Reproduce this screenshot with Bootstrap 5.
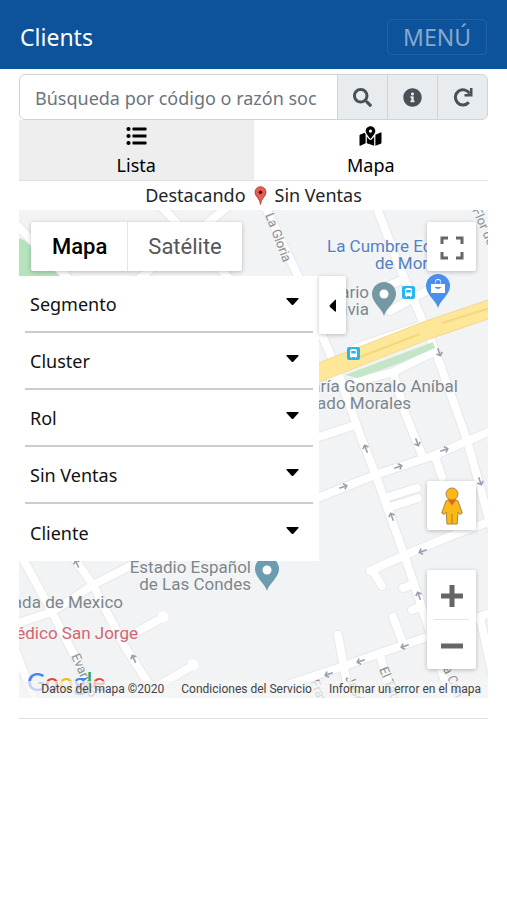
<!DOCTYPE html>
<html lang="es">
<head>
<meta charset="utf-8">
<meta name="viewport" content="width=device-width, initial-scale=1">
<title>Clients</title>
<link rel="stylesheet" href="https://cdn.jsdelivr.net/npm/bootstrap@5.3.0/dist/css/bootstrap.min.css">
<style>
  body { font-family: "Noto Sans", "Open Sans", sans-serif; font-size: 18px; line-height: 28px; color: #212529; }
  .top-bar { background: #0d539b; height: 69px; padding: 4px 20px 0; }
  .top-bar .navbar-brand { font-size: 23px; }
  .menu-btn { font-size: 23px; line-height: 24px; padding: 5px 15px; color: #86a9cd; border: 1px solid #2262a4; border-radius: 5px; }
  .page { padding: 5px 19px 0; }
  .search .form-control { font-size: 18px; height: 46px; padding: 2px 20px 0 15px; border-color: #ced4da; }
  .search .form-control::placeholder { color: #6c757d; }
  .search .btn { width: 51px; padding: 0 0 3px; background: #e9ecef; border-color: #ced4da; color: #495057; }
  .view-tabs { border-bottom: 1px solid #dee2e6; }
  .view-tabs a { height: 60px; padding-top: 5px; gap: 4px; color: #000; text-decoration: none; }
  .view-tabs a.inactive { background: #eee; }
  .view-tabs svg { height: 22px; }
  .status { height: 29px; line-height: 29px; }
  .map { height: 488px; background: #f1f3f4; font-family: Roboto, sans-serif; }
  .map-tile { box-shadow: 0 1px 4px rgba(0,0,0,.25); border-radius: 2px; background: #fff; }
  .map-type { top: 12px; left: 12px; height: 49px; }
  .map-type button { border: 0; background: none; font-size: 22px; color: #565656; padding: 0 20px; }
  .map-type button:first-child { color: #000; font-weight: 500; border-right: 1px solid #e6e6e6; padding-left: 21px; }
  .map-side { top: 12px; right: 12px; bottom: 29px; width: 49px; }
  .map-side button { border: 0; width: 49px; height: 49px; padding: 0; }
  .zoom-box { margin-top: 40px; }
  .zoom-box hr { margin: 0 7px; color: #999; }
  .filters { top: 66px; left: 0; width: 300px; background: #fff; padding: 0 6px; font-family: "Noto Sans", sans-serif; }
  .filters button { height: 57px; padding: 0 14px 0 5px; background: none; border: 0; border-bottom: 2px solid #ccc; font-size: 18px; color: #111; }
  .filters li:last-child button { border-bottom: 0; }
  .filters svg { margin-bottom: 3px; }
  .collapse-btn { top: 66px; left: 300px; width: 27px; height: 58px; border: 0; padding: 0; }
  .brand-mark { left: 8px; bottom: 2px; font: 500 25px/30px Lato, sans-serif; }
  .c-b { color: #4285f4; } .c-r { color: #ea4335; } .c-y { color: #fbbc05; } .c-g { color: #34a853; }
  .legal { left: 0; right: 0; bottom: 0; height: 17px; line-height: 17px; font-size: 12px; gap: 17px; padding-right: 7px; background: rgba(245,245,245,.7); }
  .legal, .legal a { color: #444; text-decoration: none; }
  .page-rule { margin: 20px 0; color: #888; }
</style>
<script src="https://cdn.jsdelivr.net/npm/bootstrap@5.3.0/dist/js/bootstrap.bundle.min.js"></script>
</head>
<body>
<nav class="top-bar d-flex align-items-center justify-content-between">
  <a class="navbar-brand text-white m-0" href="#">Clients</a>
  <button class="btn menu-btn" type="button">MENÚ</button>
</nav>
<main class="page">
  <form class="search input-group">
    <input class="form-control" type="text" placeholder="Búsqueda por código o razón social" aria-label="Búsqueda por código o razón social">
    <button class="btn" type="button" aria-label="Buscar"><svg width="19" height="19" viewBox="0 0 512 512" fill="currentColor"><path d="M505 442.700 405.300 343c-4.500-4.500-10.600-7-17-7H372c27.600-35.300 44-79.700 44-128C416 93.100 322.900 0 208 0S0 93.100 0 208s93.100 208 208 208c48.300 0 92.700-16.400 128-44v16.300c0 6.400 2.500 12.500 7 17l99.700 99.700c9.400 9.400 24.600 9.400 33.900 0l28.300-28.300c9.400-9.400 9.400-24.600.1-34zM208 336c-70.700 0-128-57.200-128-128 0-70.700 57.200-128 128-128 70.700 0 128 57.200 128 128 0 70.700-57.200 128-128 128z"/></svg></button>
    <button class="btn" type="button" aria-label="Información"><svg width="19" height="19" viewBox="0 0 512 512" fill="currentColor"><path d="M256 8C119 8 8 119.100 8 256s111 248 248 248 248-111 248-248S393 8 256 8zm0 110c23.200 0 42 18.800 42 42s-18.800 42-42 42-42-18.800-42-42 18.800-42 42-42zm56 254c0 6.600-5.400 12-12 12h-88c-6.600 0-12-5.400-12-12v-24c0-6.600 5.400-12 12-12h12v-64h-12c-6.600 0-12-5.400-12-12v-24c0-6.600 5.400-12 12-12h64c6.600 0 12 5.400 12 12v100h12c6.600 0 12 5.400 12 12z"/></svg></button>
    <button class="btn" type="button" aria-label="Actualizar"><svg width="20" height="20" viewBox="0 0 20 20" fill="none" stroke="currentColor" stroke-width="3"><path d="M16.500 6.500A7.600 7.600 0 1 0 15.800 15.200"/><path d="M18.200 1v7.200H11.500" stroke-width="2.600"/></svg></button>
  </form>
  <div class="view-tabs row g-0 text-center">
    <a class="inactive col d-flex flex-column align-items-center" href="#lista">
      <svg width="21" viewBox="0 0 21 22"><g fill="#000"><circle cx="2.500" cy="4" r="2.100"/><circle cx="2.500" cy="11" r="2.100"/><circle cx="2.500" cy="18" r="2.100"/><rect x="6.500" y="2.600" width="14" height="2.800" rx=".6"/><rect x="6.500" y="9.600" width="14" height="2.800" rx=".6"/><rect x="6.500" y="16.600" width="14" height="2.800" rx=".6"/></g></svg>
      <span>Lista</span>
    </a>
    <a class="col d-flex flex-column align-items-center" href="#mapa">
      <svg width="23" viewBox="0 -32 576 576"><path d="M288 0c-69.600 0-126 56.400-126 126 0 56.300 82.400 158.800 113.900 196 6.400 7.500 17.800 7.500 24.200 0C331.600 284.800 414 182.300 414 126 414 56.400 357.600 0 288 0zm0 168a42 42 0 1 1 0-84 42 42 0 0 1 0 84zM20.100 216A32 32 0 0 0 0 245.700V496c0 11.300 11.400 19 21.900 14.900L160 448V214.900c-8.800-16-16.100-31.500-21.300-46.400zM288 359.700c-14.100 0-27.400-6.200-36.500-17-19.700-23.200-40.600-49.600-59.500-76.700V448l192 64V266c-18.900 27.100-39.800 53.500-59.500 76.700-9.100 10.800-22.400 17-36.500 17zm266.100-198.600L416 224v288l139.900-56A32 32 0 0 0 576 426.300V176c0-11.300-11.400-19-21.900-14.900z"/></svg>
      <span>Mapa</span>
    </a>
  </div>
  <div class="status d-flex justify-content-center align-items-center gap-2">
    <span>Destacando</span>
    <svg width="13" height="19" viewBox="0 0 13 19"><path d="M6.500 18.500C6.200 12.500 1 10.500 1 6.200a5.500 5.500 0 0 1 11 0C12 10.500 6.800 12.500 6.500 18.500z" fill="#ea5b50" stroke="#a5372f" stroke-width=".8"/><circle cx="6.500" cy="6.200" r="1.800" fill="#3c0c08"/></svg>
    <span>Sin Ventas</span>
  </div>

  <section class="map position-relative overflow-hidden" aria-label="Mapa">
    <svg class="d-block w-100 h-100" viewBox="19 210 469 488" preserveAspectRatio="xMidYMid slice">
      <defs>
        <g id="roads" fill="none" stroke-linecap="round" stroke-linejoin="round">
          <path d="M10 218 75 285M158 203 240 290M236 200 125 290" />
          <path d="M262 200 300 280 320 330 340 378 362 440 375 473 405 557 427 623 450 698"/>
          <path d="M375 203 400 268 435 350 467 440 492 530"/>
          <path d="M325 375 345 385 393 372 434 352M393 372 405 413 422 455"/>
          <path d="M310 440 355 425M310 501 375 475 435 455 500 427"/>
          <path d="M435 457 442 477M388 497 417 488M390 507 418 498"/>
          <path d="M370 571 405 555 453 535 500 518M374 573 382 586M403 588 414 584M412 610 420 607"/>
          <path d="M290 684 347 665 383 652 427 637 500 609M338 635 350 700M393 617 403 643M380 655 392 698M480 617 492 672"/>
          <path d="M18 550 52 612 74 655 97 705M65 545 93 585 125 647 158 698"/>
          <path d="M15 624 52 612 93 585 130 566M137 632 162 618M158 686 192 666M15 650 37 705"/>
          <path d="M355 348 422 325M385 287 405 279M390 311 430 289"/>
        </g>
        <path id="arrow" d="M-4 0H4M1-3 4 0 1 3" fill="none" stroke="#9a9fae" stroke-width="1.600"/>
        <g id="bus"><rect width="13" height="13" rx="2" fill="#27b7f0"/><path d="M3 4q0-2 2-2h3q2 0 2 2v6H9v1H8v-1H5v1H4v-1H3z" fill="#fff"/><path d="M4.200 4h4.600v2.500H4.200z" fill="#27b7f0"/></g>
        <path id="pin" d="M0 17C-2 9-12 4-12-5a12 12 0 0 1 24 0C12 4 2 9 0 17z"/>
      </defs>
      <rect x="19" y="210" width="469" height="488" fill="#f1f3f4"/>
      <path d="M19 238 31 243 62 277H19z" fill="#b5e3bd"/>
      <use href="#roads" stroke="#e6e8eb" stroke-width="10"/>
      <use href="#roads" stroke="#fff" stroke-width="8"/>
      <circle cx="163" cy="617" r="5.500" fill="#fff"/><circle cx="193" cy="665" r="5.500" fill="#fff"/>
      <path d="M345 375 433 342 435 348 400 363 358 378z" fill="#c3e6c6"/>
      <path d="M305 378 425 331 507 303" fill="none" stroke="#f3d98e" stroke-width="19"/>
      <path d="M305 378 425 331 507 303" fill="none" stroke="#ffe799" stroke-width="17"/>
      <path d="M360 357 420 334M442 323 490 308" stroke="#f5d77e" stroke-width="2"/>
      <use href="#arrow" transform="translate(343 487) rotate(-20)"/><use href="#arrow" transform="translate(398 467) rotate(-20)"/><use href="#arrow" transform="translate(444 450) rotate(-20)"/>
      <use href="#arrow" transform="translate(366 449) rotate(-110)"/><use href="#arrow" transform="translate(392 517) rotate(-110)"/><use href="#arrow" transform="translate(417 442) rotate(70)"/>
      <use href="#arrow" transform="translate(439 352) rotate(70)"/><use href="#arrow" transform="translate(480 481) rotate(70)"/><use href="#arrow" transform="translate(423 551) rotate(160)"/>
      <use href="#arrow" transform="translate(419 596) rotate(-110)"/><use href="#arrow" transform="translate(405 646) rotate(160)"/><use href="#arrow" transform="translate(361 661) rotate(160)"/>
      <use href="#arrow" transform="translate(329 674) rotate(160)"/><use href="#arrow" transform="translate(134 659) rotate(-115)"/><use href="#arrow" transform="translate(77 564) rotate(-115)"/>
      <g font-size="13" fill="#8b8f94" stroke="#f5f6f7" stroke-width="2" paint-order="stroke">
        <text transform="translate(265 215) rotate(69)">La Gloria</text>
        <text transform="translate(472 210) rotate(66)">Flor de Azucenas</text>
        <text transform="translate(71 656) rotate(66)">Evaristo</text>
        <text transform="translate(379 669) rotate(68)">El Tata</text>
        <text transform="translate(345 678) rotate(66)">José</text>
        <text transform="translate(310 682) rotate(66)">Fray</text>
        <text transform="translate(440 662) rotate(66)">La Can</text>
      </g>
      <g font-size="17" fill="#7b868c" stroke="#f5f6f7" stroke-width="2" paint-order="stroke">
        <g fill="#5580c4"><text x="327" y="252">La Cumbre Edificio</text><text x="375" y="269">de Morales</text></g>
        <text x="369" y="298" text-anchor="end">Santuario</text><text x="369" y="315" text-anchor="end">Bolivia</text>
        <text x="458" y="392" text-anchor="end">María Gonzalo Aníbal</text><text x="411" y="409" text-anchor="end">Hurtado Morales</text>
        <text x="251" y="573" text-anchor="end">Estadio Español</text><text x="251" y="590" text-anchor="end">de Las Condes</text>
        <text x="123" y="608" text-anchor="end">Embajada de Mexico</text>
        <text x="138" y="639" text-anchor="end" fill="#cf6670">Centro Médico San Jorge</text>
      </g>
      <use href="#pin" x="384" y="299" fill="#7697a4"/><circle cx="384" cy="294" r="4.500" fill="#fff"/>
      <use href="#pin" x="267" y="574" fill="#6c9cb0"/><circle cx="267" cy="570" r="4.500" fill="#fff"/>
      <use href="#pin" x="438" y="291" fill="#4a8fea"/>
      <path d="M431 284h14v9h-14zM435 284v-2q0-3 3-3t3 3v2" fill="#fff"/><path d="M435.500 284v-2q0-2 2.500-2t2.500 2v2zM434.500 287q3.500 4 7 0" fill="#4a8fea"/>
      <use href="#bus" x="402" y="286"/><use href="#bus" x="347" y="347"/>
    </svg>

    <div class="map-type map-tile position-absolute d-flex">
      <button type="button">Mapa</button><button type="button">Satélite</button>
    </div>
    <div class="map-side position-absolute d-flex flex-column">
      <button class="map-tile mb-auto" type="button" aria-label="Pantalla completa"><svg width="24" height="24" fill="none" stroke="#666" stroke-width="3"><path d="M2 8V2h6M16 2h6v6M22 16v6h-6M8 22H2v-6"/></svg></button>
      <button class="map-tile" type="button" aria-label="Street View"><svg width="22" height="38" viewBox="0 0 22 38"><path d="M5 14Q6.500 12 11 12t6 2l4.300 12-2.600 1.500L17 25l-.8 12H6L5.200 25l-2 2.500L.700 26z" fill="#fbb917" stroke="#a88748" stroke-width="1"/><path d="M7 13h8l-4 5.500z" fill="#e8621d"/><path d="M11 27v10" stroke="#b97a18"/><circle cx="11" cy="7" r="6" fill="#fbb917" stroke="#a88748"/></svg></button>
      <div class="zoom-box map-tile">
        <button class="bg-transparent d-block" type="button" aria-label="Acercar"><svg width="24" height="24"><path d="M12 1v22M1 12h22" stroke="#666" stroke-width="5"/></svg></button>
        <hr>
        <button class="bg-transparent d-block" type="button" aria-label="Alejar"><svg width="24" height="24"><path d="M1 12h22" stroke="#666" stroke-width="5"/></svg></button>
      </div>
    </div>
    <ul class="filters list-unstyled position-absolute m-0">
      <li><button class="w-100 d-flex justify-content-between align-items-center" type="button">Segmento<svg width="13" height="10"><path d="M1 1h11q1 0 .5 1L7.500 7.500q-1 1-2 0L.5 2Q0 1 1 1z"/></svg></button></li>
      <li><button class="w-100 d-flex justify-content-between align-items-center" type="button">Cluster<svg width="13" height="10"><path d="M1 1h11q1 0 .5 1L7.500 7.500q-1 1-2 0L.5 2Q0 1 1 1z"/></svg></button></li>
      <li><button class="w-100 d-flex justify-content-between align-items-center" type="button">Rol<svg width="13" height="10"><path d="M1 1h11q1 0 .5 1L7.500 7.500q-1 1-2 0L.5 2Q0 1 1 1z"/></svg></button></li>
      <li><button class="w-100 d-flex justify-content-between align-items-center" type="button">Sin Ventas<svg width="13" height="10"><path d="M1 1h11q1 0 .5 1L7.500 7.500q-1 1-2 0L.5 2Q0 1 1 1z"/></svg></button></li>
      <li><button class="w-100 d-flex justify-content-between align-items-center" type="button">Cliente<svg width="13" height="10"><path d="M1 1h11q1 0 .5 1L7.500 7.500q-1 1-2 0L.5 2Q0 1 1 1z"/></svg></button></li>
    </ul>
    <button class="collapse-btn map-tile position-absolute" type="button" aria-label="Ocultar filtros"><svg width="8" height="14"><path d="M7 1v11q0 1-1 .5L1 8Q0 7 1 6L6 1q1-1 1 0z"/></svg></button>
    <div class="brand-mark position-absolute"><span class="c-b">G</span><span class="c-r">o</span><span class="c-y">o</span><span class="c-b">g</span><span class="c-g">l</span><span class="c-r">e</span></div>
    <div class="legal position-absolute d-flex justify-content-end">
      <span>Datos del mapa ©2020</span><a href="#">Condiciones del Servicio</a><a href="#">Informar un error en el mapa</a>
    </div>
  </section>
  <hr class="page-rule">
</main>
</body>
</html>
